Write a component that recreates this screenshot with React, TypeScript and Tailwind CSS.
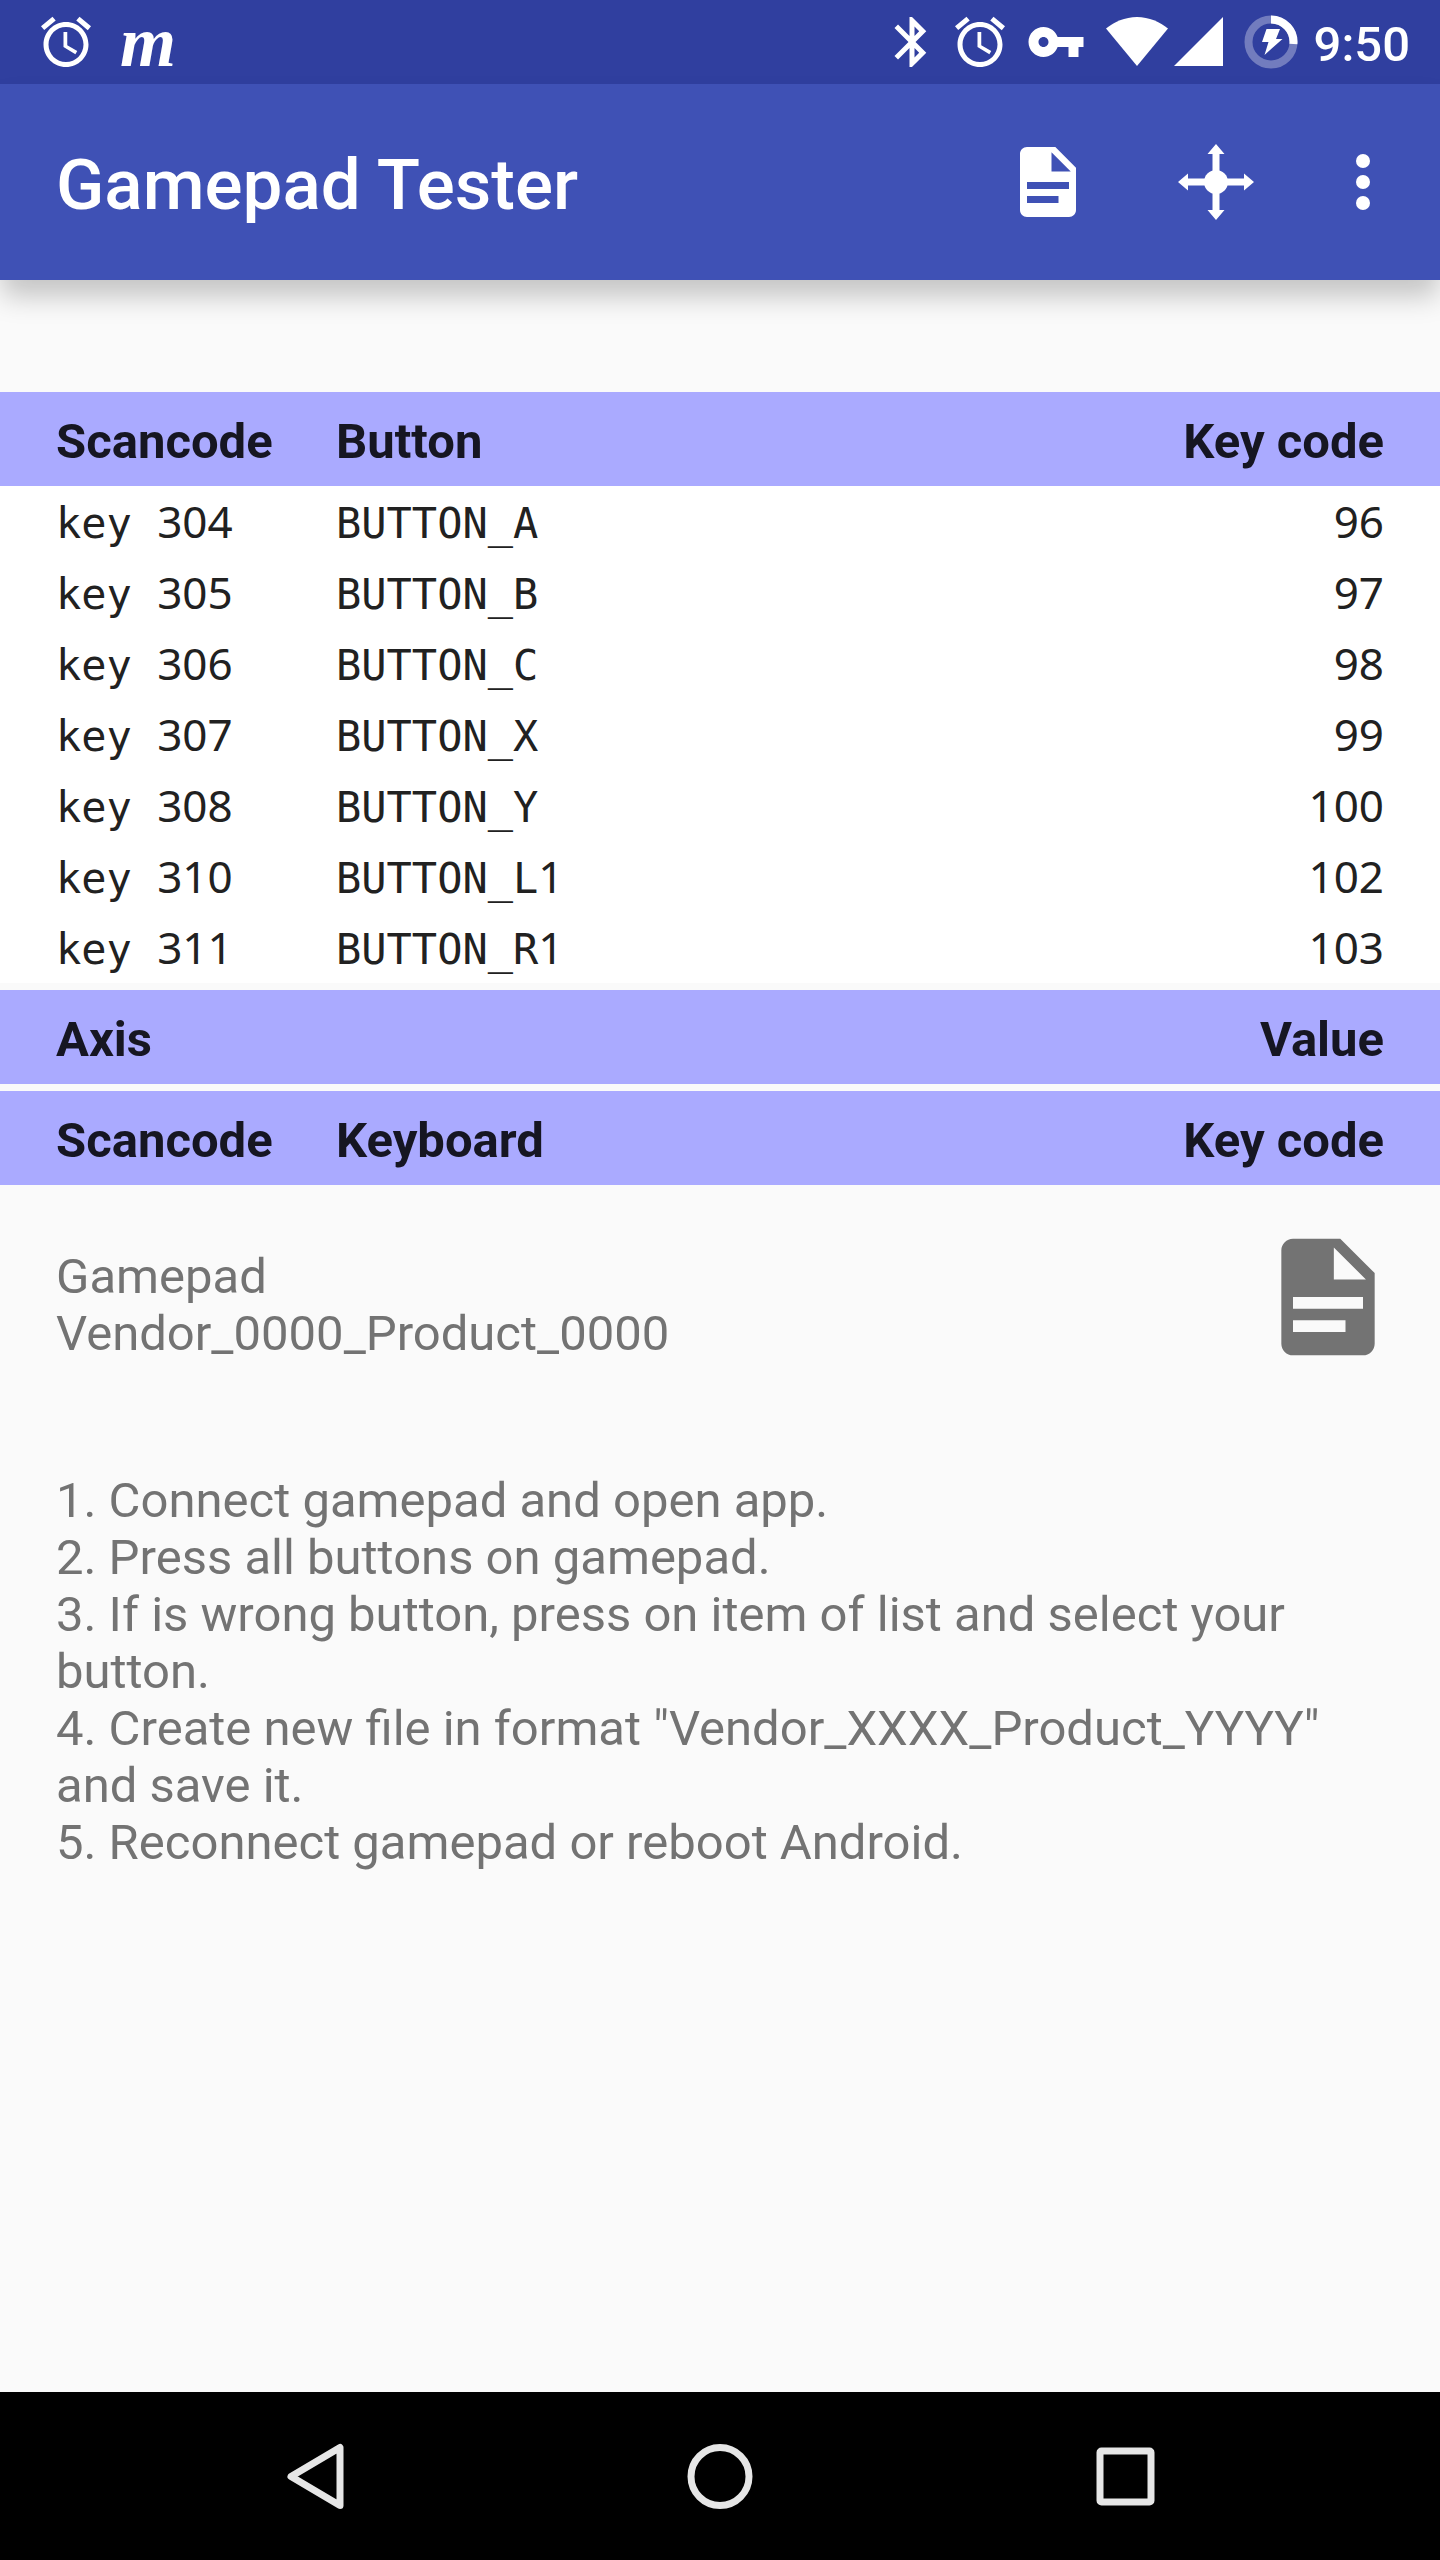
import type { ReactNode } from "react";

// Material icons share the 24x24 grid
const ALARM_PATH =
  "M22 5.72l-4.6-3.86-1.29 1.53 4.6 3.86L22 5.72zM7.88 3.39L6.6 1.86 2 5.71l1.29 1.53 4.59-3.85zM12.5 8H11v6l4.75 2.85.75-1.23-4-2.37V8zM12 4c-4.97 0-9 4.03-9 9s4.02 9 9 9c4.97 0 9-4.03 9-9s-4.03-9-9-9zm0 16c-3.87 0-7-3.13-7-7s3.13-7 7-7 7 3.13 7 7-3.13 7-7 7z";
const BLUETOOTH_PATH =
  "M17.71 7.71L12 2h-1v7.59L6.41 5 5 6.41 10.59 12 5 17.59 6.41 19 11 14.41V22h1l5.71-5.71-4.3-4.29 4.3-4.29zM13 5.83l1.88 1.88L13 9.59V5.83zm1.88 10.46L13 18.17v-3.76l1.88 1.88z";
const KEY_PATH =
  "M12.65 10C11.83 7.67 9.61 6 7 6c-3.31 0-6 2.69-6 6s2.69 6 6 6c2.61 0 4.83-1.67 5.65-4H17v4h4v-4h2v-4H12.65zM7 14c-1.1 0-2-.9-2-2s.9-2 2-2 2 .9 2 2-.9 2-2 2z";
const FILE_PATH =
  "M6 2c-1.1 0-2 .9-2 2v16c0 1.1.9 2 2 2h12c1.1 0 2-.9 2-2V7.9L14.1 2H6zm7 1.5L18.5 9H13V3.5zM6 12h12v2H6v-2zm0 4h9v2H6v-2z";

const buttons = [
  { scancode: "304", name: "BUTTON_A", keyCode: 96 },
  { scancode: "305", name: "BUTTON_B", keyCode: 97 },
  { scancode: "306", name: "BUTTON_C", keyCode: 98 },
  { scancode: "307", name: "BUTTON_X", keyCode: 99 },
  { scancode: "308", name: "BUTTON_Y", keyCode: 100 },
  { scancode: "310", name: "BUTTON_L", number: 1, keyCode: 102 },
  { scancode: "311", name: "BUTTON_R", number: 1, keyCode: 103 },
];

const steps = [
  "1. Connect gamepad and open app.",
  "2. Press all buttons on gamepad.",
  "3. If is wrong button, press on item of list and select your button.",
  '4. Create new file in format "Vendor_XXXX_Product_YYYY" and save it.',
  "5. Reconnect gamepad or reboot Android.",
];

function Icon({ d, className }: { d: string; className: string }) {
  return (
    <svg viewBox="0 0 24 24" fill="currentColor" fillRule="evenodd" className={className} aria-hidden="true">
      <path d={d} />
    </svg>
  );
}

// Digits without the dotted zero of the monospace face
function Digits({ children }: { children: ReactNode }) {
  return <span className="font-['Noto_Sans',sans-serif] text-[44px] leading-none">{children}</span>;
}

function StatusBar() {
  return (
    <div className="flex h-21 items-center justify-between bg-[#303f9f] pr-[30px] pl-9 text-white">
      <div className="flex items-center gap-6">
        <Icon d={ALARM_PATH} className="size-15" />
        <span className="font-['Liberation_Serif',serif] text-[72px] leading-[72px] font-bold italic">m</span>
      </div>
      <div className="flex items-center">
        <Icon d={BLUETOOTH_PATH} className="size-15" />
        <Icon d={ALARM_PATH} className="ml-2 size-15" />
        <Icon d={KEY_PATH} className="ml-4 size-15" />
        <svg viewBox="0 0 62 50" fill="currentColor" className="ml-5 h-[50px] w-[62px]" aria-hidden="true">
          <path d="M31 49L0 11.500C8 5 19 0 31 0s23 5 31 11.500z" />
        </svg>
        <svg viewBox="0 0 50 50" fill="currentColor" className="ml-1.5 size-[50px]" aria-hidden="true">
          <path d="M0 49L49 0V49z" />
        </svg>
        <svg viewBox="0 0 54 54" className="ml-5 size-[54px]" aria-hidden="true">
          <circle cx="27" cy="27" r="22.500" fill="none" stroke="currentColor" strokeOpacity="0.32" strokeWidth="8" />
          <path d="M27 4.500A22.500 22.500 0 0 1 49.400 29" fill="none" stroke="currentColor" strokeWidth="8" />
          <path d="M22.500 14H36l-4 10h6.500L20.500 40l4-13H18z" fill="currentColor" />
        </svg>
        <span className="ml-4 pt-1 text-[49px] leading-[57px] font-medium">9:50</span>
      </div>
    </div>
  );
}

function AppBar() {
  return (
    <header className="relative flex h-49 items-center bg-[#3f51b5] pr-3.5 pl-14 text-white shadow-[0_18px_26px_-2px_rgba(0,0,0,0.22)]">
      <h1 className="flex-1 pt-1.5 text-[71px] leading-[82px] font-medium">Gamepad Tester</h1>
      <button type="button" aria-label="Save file" className="flex h-42 w-42 items-center justify-center">
        <Icon d={FILE_PATH} className="size-21" />
      </button>
      <button type="button" aria-label="Axes" className="flex h-42 w-42 items-center justify-center">
        <svg viewBox="0 0 84 84" fill="currentColor" className="size-21" aria-hidden="true">
          <circle cx="42" cy="42" r="12" />
          <path d="M38.500 14h7v56h-7zM14 38.500h56v7H14z" />
          <path d="M42 4l8.500 10h-17zM42 80l8.500-10h-17zM4 42l10-8.500v17zM80 42l-10-8.500v17z" />
        </svg>
      </button>
      <button type="button" aria-label="More options" className="flex h-42 w-[126px] items-center justify-center">
        <svg viewBox="0 0 24 24" fill="currentColor" className="size-21" aria-hidden="true">
          <circle cx="12" cy="6" r="2" />
          <circle cx="12" cy="12" r="2" />
          <circle cx="12" cy="18" r="2" />
        </svg>
      </button>
    </header>
  );
}

function HeaderRow({ left, middle, right }: { left: string; middle?: string; right: string }) {
  return (
    <thead>
      <tr className="bg-[#aaaaff] text-[49px] leading-[57px] text-[#161622]">
        <th className="w-84 pt-[21px] pb-4 pl-14 text-left font-bold">{left}</th>
        <th className="pt-[21px] pb-4 text-left font-bold">{middle}</th>
        <th className="w-84 pt-[21px] pr-14 pb-4 text-right font-bold">{right}</th>
      </tr>
    </thead>
  );
}

function ButtonTable() {
  return (
    <table className="w-full table-fixed">
      <HeaderRow left="Scancode" middle="Button" right="Key code" />
      <tbody className="bg-white font-['DejaVu_Sans_Mono',monospace] text-[42px] leading-[67px] text-[#212121]">
        {buttons.map((button) => (
          <tr key={button.scancode}>
            <td className="pt-1 pl-14">
              key <Digits>{button.scancode}</Digits>
            </td>
            <td className="pt-1">
              {button.name}
              {button.number && <Digits>{button.number}</Digits>}
            </td>
            <td className="pt-1 pr-14 text-right">
              <Digits>{button.keyCode}</Digits>
            </td>
          </tr>
        ))}
      </tbody>
    </table>
  );
}

function NavigationBar() {
  return (
    <nav className="grid h-42 grid-cols-3 items-center justify-items-center bg-black px-28 text-[#e6e6e6]">
      <button type="button" aria-label="Back">
        <svg viewBox="0 0 84 84" fill="none" stroke="currentColor" strokeWidth="7" strokeLinejoin="round" className="size-21">
          <path d="M67 13.500V71.500L18 42.500z" />
        </svg>
      </button>
      <button type="button" aria-label="Home">
        <svg viewBox="0 0 84 84" fill="none" stroke="currentColor" strokeWidth="7" className="size-21">
          <circle cx="42" cy="42.500" r="29" />
        </svg>
      </button>
      <button type="button" aria-label="Recent apps">
        <svg viewBox="0 0 84 84" fill="none" stroke="currentColor" strokeWidth="7" className="size-21">
          <rect x="17" y="17" width="51" height="51" rx="1.500" />
        </svg>
      </button>
    </nav>
  );
}

export default function App() {
  return (
    <div className="flex min-h-screen flex-col bg-[#fafafa] font-['Roboto',sans-serif]">
      <StatusBar />
      <AppBar />

      <main className="flex-1 pt-28">
        <div className="flex flex-col gap-[7px]">
          <ButtonTable />
          <table className="w-full table-fixed">
            <HeaderRow left="Axis" right="Value" />
          </table>
          <table className="w-full table-fixed">
            <HeaderRow left="Scancode" middle="Keyboard" right="Key code" />
          </table>
        </div>

        {/* Connected device */}
        <section className="flex items-start justify-between pt-[42px] pr-[42px] pl-14 text-[49px] leading-[57px] text-[#737373]">
          <p className="pt-[21px]">
            Gamepad
            <br />
            Vendor_0000_Product_0000
          </p>
          <button type="button" aria-label="Save device file">
            <Icon d={FILE_PATH} className="size-35" />
          </button>
        </section>

        <ol className="px-14 pt-[105px] text-[49px] leading-[57px] text-[#737373]">
          {steps.map((step) => (
            <li key={step}>{step}</li>
          ))}
        </ol>
      </main>

      <NavigationBar />
    </div>
  );
}
